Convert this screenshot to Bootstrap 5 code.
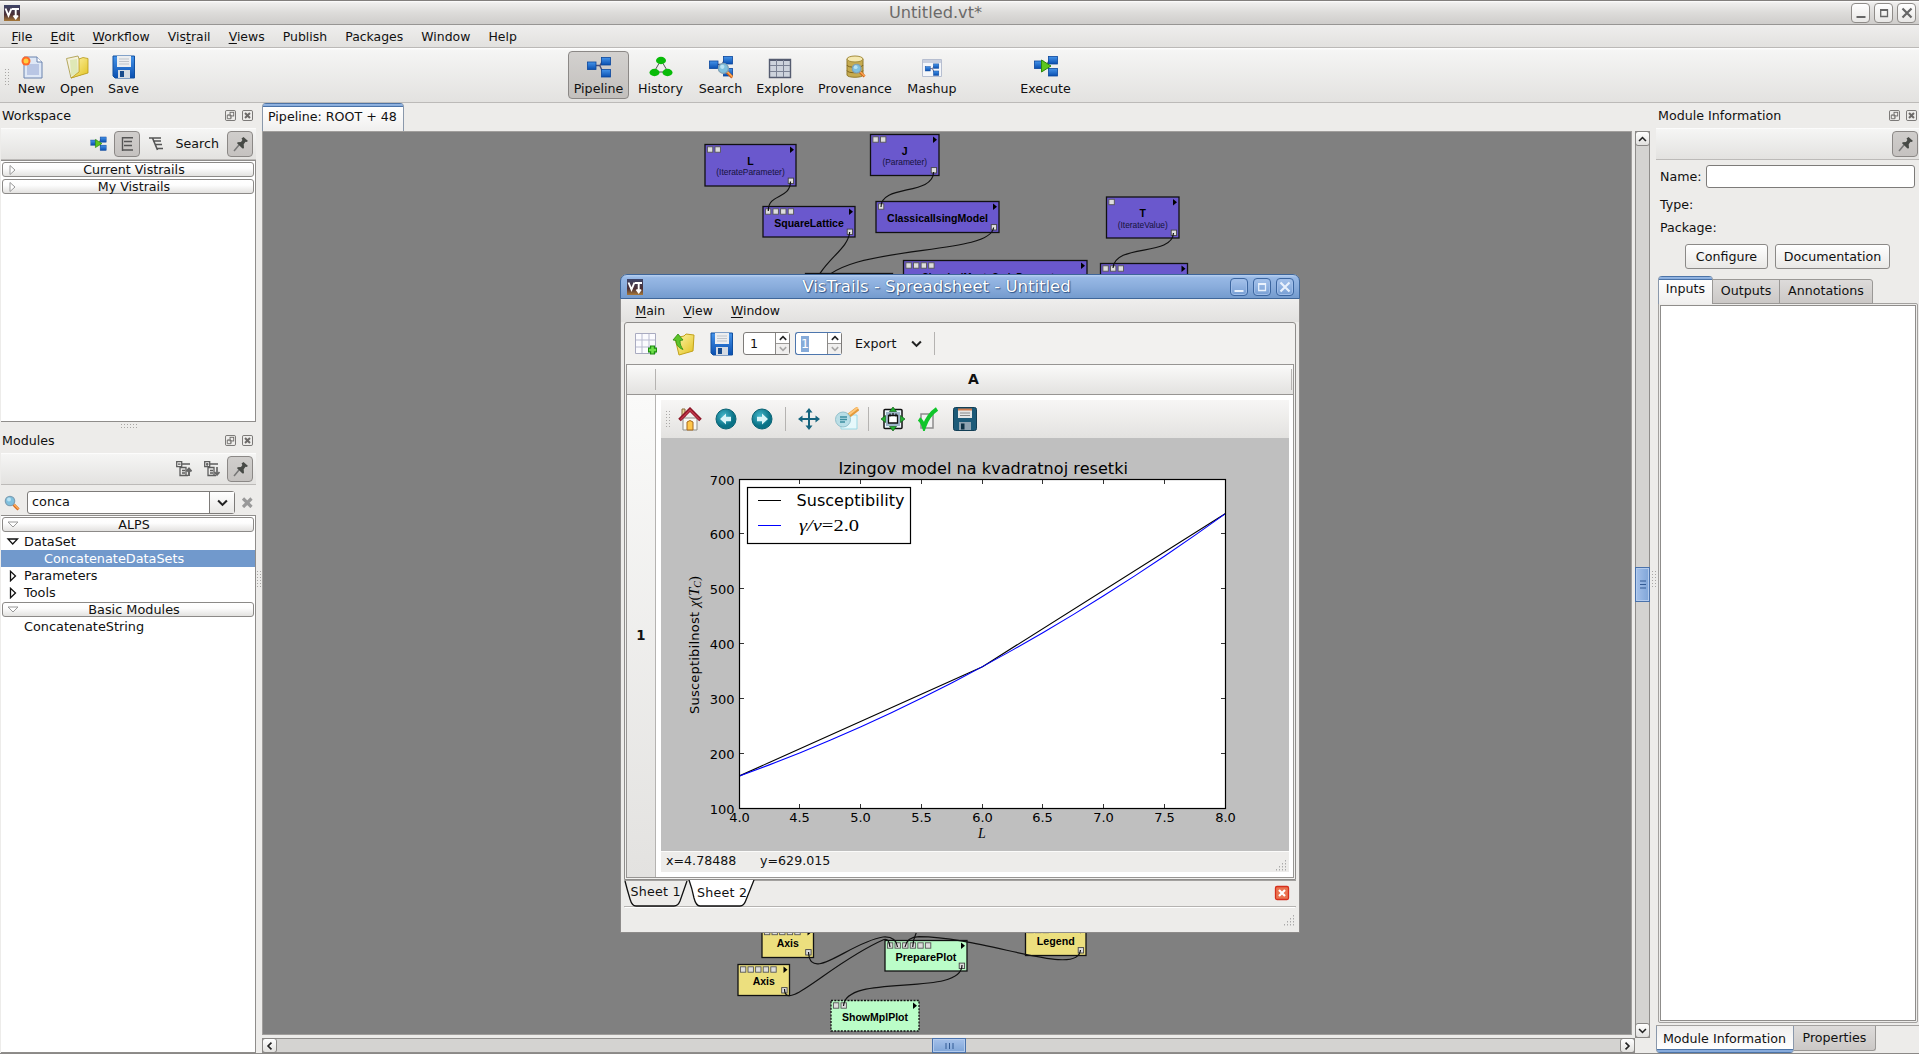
<!DOCTYPE html>
<html lang="en">
<head>
<meta charset="utf-8">
<title>Untitled.vt*</title>
<link href="https://cdn.jsdelivr.net/npm/bootstrap@5.3.0/dist/css/bootstrap.min.css" rel="stylesheet">
<script src="https://cdn.jsdelivr.net/npm/bootstrap@5.3.0/dist/js/bootstrap.bundle.min.js"></script>
<style>
*{box-sizing:border-box}
body{width:1919px;height:1054px;overflow:hidden;background:#edecea;color:#111;font:12.65px/16px "DejaVu Sans",sans-serif;white-space:nowrap;border-top:1px solid #827f7d;border-bottom:1px solid #8b8987}
svg{display:block;flex:none}
u{text-underline-offset:2px}
.title-bar{height:24px;background:linear-gradient(#fff 0,#efeeed 8%,#dddcda 50%,#cfcdcb);border-bottom:1px solid #979593;padding:0 3px 0 4px}
.title-bar .cap{font-size:16.2px;color:#6b6a69}
.wbtn{width:19px;height:20px;border:1px solid #8f8c89;border-radius:4px;background:linear-gradient(#fff,#e8e7e5);display:flex;align-items:center;justify-content:center}
.menu-bar{height:23px;padding:1px 0 0 11.5px;gap:18.1px;font-size:12.45px;background:linear-gradient(#efeeed,#e2e1df);border-bottom:1px solid #bbb9b7}
.tool-grad{background:linear-gradient(#fff 0,#f5f5f4 5%,#e3e2e0)}
.main-tools{height:55px;border-bottom:1px solid #bcbab8;padding-top:3px}
.tbtn{height:48px;padding-top:3px;border:1px solid transparent;border-radius:4px;display:flex;flex-direction:column;align-items:center;gap:2px}
.tbtn svg{height:24px}
.tbtn.on{background:linear-gradient(#d3d1cf,#c3c0bd);border-color:#8b8886;padding-top:3px}
.grip{background-image:radial-gradient(circle,#a9a7a5 .7px,transparent .9px);background-size:3px 3px}
.dock-l{width:256px;padding-left:1px}
.dock-cap{height:25px;padding:0 3px 0 1px}
.dock-tools{height:32px;border-bottom:1px solid #bcbab8;padding:0 3px 0 0}
.pin{width:26px;height:26px;border:1px solid #8b8886;border-radius:4px;background:linear-gradient(#d0cecc,#c5c2c0);display:flex;align-items:center;justify-content:center}
.pin svg{margin-left:2px}
.tree{background:#fff;border:solid #8f8d8b;border-width:1px 1px 1px 0}
.tree-row{height:17px;display:flex;align-items:center;font-size:12.85px}
.tree-head{height:15px;margin:1px;border:1px solid #8c8a88;border-radius:3px;background:linear-gradient(#fff,#fdfdfd 40%,#e3e2e0);text-align:center;position:relative;line-height:13px;padding-left:12px}
.tree-head svg{position:absolute;left:4px;top:1px}
.sel{background:#7199cc;color:#fff}
.combo{height:23px;border:1px solid #7d7b79;border-radius:3px;background:#fff}
.combo .drop{width:25px;border-left:1px solid #7d7b79;background:linear-gradient(#fff,#e9e8e6)}
.tab-top{border:1px solid #8a98ab;border-top:0;border-bottom:0;border-radius:4px 4px 0 0;background:linear-gradient(#4c74a8 0 1px,#96b8e4 1px,#86aadb 3px,#4c74a8 3px 4px,#fff 4px,#f0efee)}
.tab-off{background:linear-gradient(#dddbda,#cbc8c6);border:1px solid #9a9896}
.sb{background:#d4d3d1;border:1px solid #8f8d8b}
.sb-btn{background:linear-gradient(#fff,#e1e0de);border:1px solid #888684;border-radius:3px;width:15px;height:15px;display:flex;align-items:center;justify-content:center;margin:-1px}
.thumb{background:linear-gradient(90deg,#a5c1ea,#7fa5d8);border:1px solid #4a72ab;box-shadow:inset 0 0 0 1px #b3cbed;margin:-1px;display:flex;align-items:center;justify-content:center}
.dock-r{width:263px}
.push{height:25px;border:1px solid #8b8987;border-radius:3px;background:linear-gradient(#fff,#e9e8e6);padding:0;font-size:12.65px;line-height:16px;color:#111}
.win{left:620px;top:274px;width:680px;height:659px;background:#edecea;border:1px solid #8d8b8a;border-top:0;border-radius:7px 7px 0 0}
.win-cap{height:25px;margin:0 -1px;border:1px solid #3f6699;border-radius:7px 7px 0 0;background:linear-gradient(#b9d1f1 0,#97b8e5 12%,#8aaddc 50%,#749bce);padding:0 5px 0 6px}
.win-cap .cap{color:#fff;font-size:16.5px;text-shadow:0 0 1px #2f5487,1px 1px 1px #2f5487}
.win-cap .wbtn{width:18px;height:18px;border-color:#3c66a0;background:linear-gradient(#a5c2eb,#789fd4);box-shadow:inset 0 0 0 1px #9fbde8}
.frame2{margin:0 3px;height:558px;border:1px solid #8f8d8b;border-radius:3px 3px 0 0;padding:1px;background:#f2f1ef}
.spin{width:47px;height:23px;border:1px solid #7d7b79;border-radius:3px;background:#fff;display:flex}
.spin .ar{width:14px;border-left:1px solid #8b8987;background:linear-gradient(#fff 50%,#9b9997 50% 54%,#f0efee 54%)}
.sep{width:1px;background:#b5b3b1}
.grid-head{height:30px;border-bottom:1px solid #979593;background:linear-gradient(#fafaf9,#e3e2e0);font-weight:bold;font-size:14px}
.fig-tools{height:38px;background:linear-gradient(#f7f6f5,#e3e2e0)}
.nodes text{font-family:"Liberation Sans",sans-serif;text-anchor:middle}
</style>
</head>
<body class="d-flex flex-column">
<svg width="0" height="0" class="position-absolute">
<defs>
<linearGradient id="bl" x2="0" y2="1"><stop stop-color="#4594ea"/><stop offset="1" stop-color="#0a4fb0"/></linearGradient>
<linearGradient id="ye" x2="1" y2="1"><stop stop-color="#fff6b0"/><stop offset="1" stop-color="#e2c21e"/></linearGradient>
<radialGradient id="te" cx=".4" cy=".35"><stop stop-color="#45b8cc"/><stop offset="1" stop-color="#0a7286"/></radialGradient>
<linearGradient id="vt" x2="0" y2="1"><stop stop-color="#3d4468"/><stop offset=".6" stop-color="#4a2f35"/><stop offset="1" stop-color="#a87838"/></linearGradient>
<symbol id="logo" viewBox="0 0 16 16"><rect width="16" height="16" fill="url(#vt)"/><path d="M1.500 3.500l3 7 3-7M8 4h7M11.700 4v9M9.500 10.500l2.200 3 2.200-3" fill="none" stroke="#fff" stroke-width="1.900"/></symbol>
<symbol id="pipe" viewBox="0 0 24 22"><path d="M9 9.500h4L16 4h2M13 10l3 6.500h2" fill="none" stroke="#4a4f78" stroke-width="1.400"/><g fill="url(#bl)" stroke="#0b469c" stroke-width=".8"><rect x=".5" y="6" width="8.500" height="7.500"/><rect x="14.500" y="1.500" width="9" height="7.500"/><rect x="14.500" y="13.500" width="9" height="7.500"/></g></symbol>
<symbol id="play" viewBox="0 0 24 22"><use href="#pipe"/><path d="M7.500 5l9.500 6-9.500 6z" fill="#5cc61d" stroke="#2c8a0c"/></symbol>
<symbol id="mag" viewBox="0 0 16 16"><path d="M9.500 9.500l5 5" stroke="#d5641c" stroke-width="3"/><path d="M9.500 9l5 5" stroke="#ffb25c" stroke-width="1.300"/><circle cx="6" cy="6" r="4.700" fill="#7fc0de" stroke="#7fa0b5" stroke-width="1.200"/><circle cx="5" cy="4.500" r="2" fill="#b9e2f3"/></symbol>
<symbol id="disk" viewBox="0 0 24 24"><path d="M1 1h21.500v22H3L1 21z" fill="url(#bl)" stroke="#12509f"/><rect x="5" y="1" width="14" height="11" fill="#eceef0"/><path d="M7 4h10M7 6.500h10M7 9h10" stroke="#bfc4ca"/><rect x="6" y="15" width="12" height="8" fill="#d5dbe3"/><rect x="8" y="16" width="4" height="6" fill="#174a8c"/></symbol>
<symbol id="pinic" viewBox="0 0 16 16"><path d="M1 15L6 9" stroke="#777" stroke-width="1.500"/><path d="M8.500 2.500L10.500 1l4.500 4-1.500 1-1-.2-1.800 2.500.3 4-1.500.2L4.200 7.500l.3-1.300 3.500-.2 1.400-2z" fill="#474a46"/></symbol>
<symbol id="flt" viewBox="0 0 12 12"><g fill="none" stroke="#6c6a68"><rect x=".5" y=".5" width="11" height="11" rx="1.500"/><rect x="5.500" y="2.500" width="4" height="4"/><path d="M4 5.500H2.500v4h4V8M3 5.500h3.500V9"/></g></symbol>
<symbol id="cls" viewBox="0 0 12 12"><rect x=".5" y=".5" width="11" height="11" rx="1.500" fill="none" stroke="#6c6a68"/><path d="M3.300 3.300l5.400 5.400M8.700 3.300L3.300 8.700" stroke="#6c6a68" stroke-width="2.200"/></symbol>
<symbol id="chev" viewBox="0 0 10 7"><path d="M1 1.200l4 4 4-4" fill="none" stroke="#222" stroke-width="1.900"/></symbol>
<symbol id="minx" viewBox="0 0 12 12"><path d="M1.500 10h9" stroke="currentColor" stroke-width="2"/></symbol>
<symbol id="maxx" viewBox="0 0 12 12"><path d="M2.700 3v6.500h6.800V3z" fill="none" stroke="currentColor" stroke-width="1.300"/><path d="M2 3h8" stroke="currentColor" stroke-width="2"/></symbol>
<symbol id="xx" viewBox="0 0 12 12"><path d="M1.500 1.500l9 9M10.500 1.500l-9 9" stroke="currentColor" stroke-width="2.200"/></symbol>
<symbol id="folder" viewBox="0 0 24 24"><path d="M1.500 3.500L13 1l1 3 8.500 1L21 18 6 23z" fill="#f5f2dc" stroke="#b5a860"/><path d="M5 5l7-1 1 14-7 3z" fill="#dfe8b6"/><path d="M14 4l4-1.500 5 1V18L6 23l8-6z" fill="url(#ye)" stroke="#b89a1a" stroke-width=".8"/></symbol>
<symbol id="coll" viewBox="0 0 16 16"><g fill="none" stroke="#5d5d5d" stroke-width="1.300"><path d="M.7.700h5v5h-5zM2 3.200h2.500M6 3h8M4 6v8.500h8M4 6.500h6v8M6 9.500h3M6 12h3"/></g></symbol>
</defs></svg>

<header class="title-bar d-flex align-items-center">
<svg width="16" height="16"><use href="#logo"/></svg>
<div class="cap flex-fill text-center">Untitled.vt*</div>
<div class="d-flex" style="gap:4px;color:#666"><span class="wbtn"><svg width="12" height="12"><use href="#minx"/></svg></span><span class="wbtn"><svg width="12" height="12"><use href="#maxx"/></svg></span><span class="wbtn"><svg width="12" height="12"><use href="#xx"/></svg></span></div>
</header>
<nav class="menu-bar d-flex align-items-center"><span><u>F</u>ile</span><span><u>E</u>dit</span><span><u>W</u>orkflow</span><span>Vis<u>t</u>rail</span><span><u>V</u>iews</span><span>Publish</span><span>Packages</span><span>Window</span><span>Help</span></nav>
<div class="main-tools tool-grad d-flex">
<span class="grip" style="width:5px;height:17px;margin:17px 9px 0 4px"></span>
<div class="tbtn" style="width:27px"><svg width="24" viewBox="0 0 24 24"><path d="M4 2h13l5 5v16H4z" fill="#dfe8f6" stroke="#6b83ae"/><path d="M17 2v5h5" fill="#fff" stroke="#6b83ae"/><path d="M7 9h12v11H7z" fill="#b9c6e4"/><circle cx="6" cy="6" r="4.500" fill="#ff6a2a"/><circle cx="6" cy="6" r="2.500" fill="#ffd040"/></svg><span>New</span></div>
<div class="tbtn" style="width:36px;margin-left:14px"><svg width="24"><use href="#folder"/></svg><span>Open</span></div>
<div class="tbtn" style="width:31px;margin-left:13px"><svg width="24"><use href="#disk"/></svg><span>Save</span></div>
<div class="tbtn on" style="width:61px;margin-left:429px"><svg width="24"><use href="#pipe" width="24" height="22" y="1"/></svg><span>Pipeline</span></div>
<div class="tbtn" style="width:57px;margin-left:3px"><svg width="24" viewBox="0 0 24 24"><path d="M12 5L5 17M12 5l7 12M8 17h8" stroke="#555"/><g fill="#08bb08"><ellipse cx="12" cy="5.500" rx="5" ry="3.700"/><ellipse cx="5.500" cy="17.500" rx="5" ry="3.700"/><ellipse cx="18.500" cy="17.500" rx="5" ry="3.700"/></g></svg><span>History</span></div>
<div class="tbtn" style="width:57px;margin-left:3px"><svg width="24"><use href="#pipe" width="24" height="22"/><use href="#mag" x="8" y="7" width="17" height="17"/></svg><span>Search</span></div>
<div class="tbtn" style="width:58px;margin-left:2px"><svg width="24" viewBox="0 0 24 24"><path d="M1.500 4.500h21v18h-21z" fill="#cdd3dc" stroke="#555c70" stroke-width="1.400"/><path d="M1 5h22" stroke="#555c70" stroke-width="2"/><path d="M8.500 5v17M15.500 5v17M2 10.500h20M2 16.500h20" stroke="#7b8294"/></svg><span>Explore</span></div>
<div class="tbtn" style="width:86px;margin-left:3px"><svg width="24" viewBox="0 0 24 24"><path d="M4 4v16c0 3 16 3 16 0V4z" fill="#c6ab50" stroke="#927a2c"/><ellipse cx="12" cy="4" rx="8" ry="3" fill="#f4e8b0" stroke="#a58d3c"/><path d="M4 10c0 3 16 3 16 0M4 15.500c0 3 16 3 16 0" fill="none" stroke="#7d6420"/><use href="#mag" x="8" y="8" width="15" height="15"/></svg><span>Provenance</span></div>
<div class="tbtn" style="width:62px;margin-left:3px"><svg width="24" viewBox="0 0 24 24"><path d="M2.500 4.500h19v17h-19z" fill="#f4f6fa" stroke="#b6bed0"/><path d="M3 6.500h18" stroke="#c9cfde" stroke-width="3"/><use href="#pipe" x="4" y="8" width="16" height="13"/></svg><span>Mashup</span></div>
<div class="tbtn" style="width:63px;margin-left:51px"><svg width="24"><use href="#play" width="24" height="22"/></svg><span>Execute</span></div>
</div>

<main class="d-flex flex-fill" style="min-height:0">
<aside class="dock-l d-flex flex-column">
<div class="dock-cap d-flex align-items-center"><span class="flex-fill">Workspace</span><svg width="11" height="11" class="me-1"><use href="#flt"/></svg><svg width="11" height="11" style="margin:0 0 0 2px"><use href="#cls"/></svg></div>
<div class="dock-tools tool-grad d-flex align-items-center justify-content-end">
<svg width="17" height="15"><use href="#play"/></svg>
<span class="pin" style="margin-left:7px"><svg width="14" height="16" viewBox="0 0 14 16" class="m-0"><path d="M2.500 1v14M2 1.700h11M4 5.500h8M4 9.500h8M2 14h11" fill="none" stroke="#555" stroke-width="1.400"/></svg></span>
<svg width="14" height="15" viewBox="0 0 14 15" style="margin-left:9px"><path d="M0 2h12M4 5h8M6 8.500h7M8 12.500h6M3.500 2l5 12" fill="none" stroke="#555" stroke-width="1.600"/></svg>
<span style="margin:0 8px 0 13px">Search</span><span class="pin"><svg width="16" height="16"><use href="#pinic"/></svg></span></div>
<div class="tree" style="height:262px">
<div class="tree-head"><svg width="12" height="12"><path d="M3 1.500v9l5-4.500z" fill="#fff" stroke="#999"/></svg>Current Vistrails</div>
<div class="tree-head" style="margin-top:2px"><svg width="12" height="12"><path d="M3 1.500v9l5-4.500z" fill="#fff" stroke="#999"/></svg>My Vistrails</div></div>
<div class="d-flex justify-content-center align-items-end" style="height:6px"><span class="grip" style="width:18px;height:5px"></span></div>
<div class="dock-cap d-flex align-items-center"><span class="flex-fill">Modules</span><svg width="11" height="11" class="me-1"><use href="#flt"/></svg><svg width="11" height="11" style="margin:0 0 0 2px"><use href="#cls"/></svg></div>
<div class="dock-tools tool-grad d-flex align-items-center justify-content-end">
<svg width="16" height="16"><use href="#coll"/><path d="M13 15V8M10.500 10.500L13 7.500l2.500 3" fill="none" stroke="#666" stroke-width="2"/></svg>
<svg width="16" height="16" style="margin:0 7px 0 12px"><use href="#coll"/><path d="M3.200 2v2.800M13 6v8M10.500 11l2.500 3 2.500-3" fill="none" stroke="#666" stroke-width="1.700"/></svg>
<span class="pin"><svg width="16" height="16"><use href="#pinic"/></svg></span></div>
<div class="d-flex align-items-center" style="height:30px;padding:5px 3px 0"><svg width="16" height="16"><use href="#mag"/></svg>
<div class="combo d-flex" style="width:208px;margin:0 7px"><span class="flex-fill" style="padding:2px 4px;font-size:12.85px">conca</span><span class="drop d-flex align-items-center justify-content-center"><svg width="11" height="8"><use href="#chev"/></svg></span></div>
<svg width="11" height="11"><path d="M1 1.500l8.500 8.500M9.500 1.500L1 10" stroke="#999" stroke-width="3.200"/></svg></div>
<div class="tree flex-fill">
<div class="tree-head"><svg width="12" height="12"><path d="M1 3h10l-5 5z" fill="#fff" stroke="#999"/></svg>ALPS</div>
<div class="tree-row"><svg width="23" height="12"><path d="M7 3h9.500L11.700 8z" fill="none" stroke="#111" stroke-width="1.300"/></svg>DataSet</div>
<div class="tree-row sel" style="padding-left:43px">ConcatenateDataSets</div>
<div class="tree-row"><svg width="23" height="12"><path d="M9.500 1.300v9.500l5-4.800z" fill="none" stroke="#111" stroke-width="1.300"/></svg>Parameters</div>
<div class="tree-row"><svg width="23" height="12"><path d="M9.500 1.300v9.500l5-4.800z" fill="none" stroke="#111" stroke-width="1.300"/></svg>Tools</div>
<div class="tree-head" style="font-size:12.850px"><svg width="12" height="12"><path d="M1 3h10l-5 5z" fill="#fff" stroke="#999"/></svg>Basic Modules</div>
<div class="tree-row" style="padding-left:23px">ConcatenateString</div></div>
</aside>
<div class="d-flex align-items-center" style="width:6px"><span class="grip" style="width:6px;height:17px"></span></div>
<section class="d-flex flex-column" style="width:1389px">
<div style="height:28px"><div class="tab-top" style="width:142px;height:28px;padding:5px 5px;line-height:17px">Pipeline: ROOT + 48</div></div>
<div class="d-flex flex-fill" style="min-height:0">
<div style="width:1370px;height:904px;border:1px solid #a09e9c;background:#808080">
<svg id="canvas" class="nodes" width="1368" height="902" viewBox="263 132 1368 902"></svg></div>
<div class="sb d-flex flex-column" style="width:15px;margin-left:3px;height:907px">
<span class="sb-btn"><svg width="9" height="6" style="transform:rotate(180deg)"><use href="#chev"/></svg></span>
<span class="thumb" style="height:35px;margin-top:422px"><svg width="6" height="9"><path d="M0 1h6M0 4.500h6M0 8h6" stroke="#335b94"/></svg></span>
<span class="sb-btn mt-auto"><svg width="9" height="6"><use href="#chev"/></svg></span></div></div>
<div class="sb d-flex" style="width:1373px;height:15px">
<span class="sb-btn"><svg width="9" height="6" style="transform:rotate(90deg)"><use href="#chev"/></svg></span>
<span class="thumb" style="width:34px;margin-left:656px;background:linear-gradient(#a5c1ea,#7fa5d8)"><svg width="9" height="6"><path d="M1 0v6M4.500 0v6M8 0v6" stroke="#335b94"/></svg></span>
<span class="sb-btn ms-auto"><svg width="9" height="6" style="transform:rotate(-90deg)"><use href="#chev"/></svg></span></div>
</section>
<div class="d-flex align-items-center" style="width:5px"><span class="grip" style="width:5px;height:17px"></span></div>
<aside class="dock-r d-flex flex-column">
<div class="dock-cap d-flex align-items-center" style="padding-right:2px"><span class="flex-fill" style="padding-left:1px">Module Information</span><svg width="11" height="11" class="me-1"><use href="#flt"/></svg><svg width="11" height="11" style="margin:0 0 0 2px"><use href="#cls"/></svg></div>
<div class="dock-tools tool-grad d-flex align-items-center justify-content-end" style="padding-right:1px"><span class="pin"><svg width="16" height="16"><use href="#pinic"/></svg></span></div>
<div class="d-flex align-items-center" style="padding:5px 4px 0"><span style="width:46px">Name:</span><span class="combo flex-fill"></span></div>
<div style="padding:9px 4px 0">Type:</div><div style="padding:7px 4px 8px">Package:</div>
<div class="d-flex" style="padding-left:29px;gap:7px"><button class="push" style="width:83px">Configure</button><button class="push" style="width:115px">Documentation</button></div>
<div class="d-flex align-items-end" style="margin:7px 0 -1px 2px;position:relative;z-index:1"><span class="tab-top text-center" style="width:55px;height:28px;padding-top:5px">Inputs</span><span class="tab-off text-center" style="width:68px;height:25px;padding-top:3px;margin-left:-1px">Outputs</span><span class="tab-off text-center" style="width:94px;height:25px;padding-top:3px;border-radius:0 3px 0 0;margin-left:-1px">Annotations</span></div>
<div class="flex-fill" style="margin-left:2px;margin-right:1px;border:1px solid #a3a19f;padding:1px;border-radius:0 2px 2px 2px"><div class="h-100 bg-white" style="border:1px solid #8f8d8b"></div></div>
<div class="d-flex" style="margin-top:2px;border-top:1px solid #a3a19f;height:28px"><span class="text-center" style="width:138px;height:27px;padding:5px 1px 0 0;border:1px solid #8a98ab;border-width:0 1px;border-radius:0 0 4px 4px;background:linear-gradient(0deg,#4c74a8 0 1px,#86aadb 1px 3px,#4c74a8 3px 4px,#fff 4px,#f0efee)">Module Information</span><span class="tab-off text-center" style="width:82px;height:25px;padding-top:4px;border-width:0 1px 1px 0;border-radius:0 0 3px 0">Properties</span></div>
</aside>
</main>

<div class="win position-absolute d-flex flex-column">
<div class="win-cap d-flex align-items-center"><svg width="16" height="16"><use href="#logo"/></svg><div class="cap flex-fill text-center">VisTrails - Spreadsheet - Untitled</div><div class="d-flex" style="gap:5px;color:#e9f1fc"><span class="wbtn"><svg width="12" height="12"><use href="#minx"/></svg></span><span class="wbtn"><svg width="12" height="12"><use href="#maxx"/></svg></span><span class="wbtn"><svg width="12" height="12"><use href="#xx"/></svg></span></div></div>
<div class="menu-bar d-flex align-items-center" style="padding:0 0 0 14.500px;border:0"><span><u>M</u>ain</span><span><u>V</u>iew</span><span><u>W</u>indow</span></div>
<div class="frame2">
<div class="d-flex align-items-center" style="height:40px;padding:0 0 1px 8px">
<svg width="24" height="24" viewBox="0 0 24 24"><path d="M1.500 1.500h20v20h-20z" fill="#fbfbfe" stroke="#a9abc0"/><path d="M8 2v19M15 2v19M2 8h19M2 15h19" stroke="#b9bbd0"/><path d="M14 18h9M18.500 13.500v9" stroke="#1d8d10" stroke-width="5"/><path d="M15 18h7M18.500 14.500v7" stroke="#6fe04a" stroke-width="2.600"/></svg>
<svg width="24" height="24" viewBox="0 0 24 24" style="margin-left:14px"><path d="M3 6l9-2 2-2 8 1-1 16-14 4z" fill="url(#ye)" stroke="#c2a21a"/><path d="M1 8l5-6 5 6-3 .5c0 4 1 6 3 9-5-2-7-5-7-9z" fill="#5ec42a" stroke="#2f8d10" stroke-width=".8"/></svg>
<svg width="24" height="24" style="margin-left:14px"><use href="#disk"/></svg>
<div class="spin" style="margin-left:9px"><span class="flex-fill" style="padding:3px 6px">1</span><span class="ar d-flex flex-column align-items-center justify-content-around"><svg width="8" height="6" style="transform:rotate(180deg)"><use href="#chev"/></svg><svg width="8" height="6" opacity=".35"><use href="#chev"/></svg></span></div>
<div class="spin" style="margin-left:5px;border-color:#4d76ad #7d7b79 #4d76ad #4d76ad"><span class="flex-fill" style="padding:3px 5px"><span class="d-inline-block" style="background:#86abd9;color:#fff;width:8px;height:16px">1</span></span><span class="ar d-flex flex-column align-items-center justify-content-around"><svg width="8" height="6" style="transform:rotate(180deg)"><use href="#chev"/></svg><svg width="8" height="6" opacity=".35"><use href="#chev"/></svg></span></div>
<span style="margin:0 15px 0 13px">Export</span><svg width="11" height="8"><use href="#chev"/></svg><span class="sep" style="height:23px;margin-left:12px"></span></div>
<div style="border:1px solid #979593;height:514px;background:#fff">
<div class="grid-head d-flex"><span style="width:29px;border-right:1px solid #b5b3b1;margin:4px 0"></span><span class="flex-fill text-center" style="border-right:1px solid #b5b3b1;margin:4px 1px 4px 0;padding-top:2px">A</span></div>
<div class="d-flex" style="height:482px"><div class="d-flex align-items-center justify-content-center fw-bold" style="width:29px;font-size:13.300px;border-right:1px solid #b5b3b1;background:linear-gradient(#fafaf9,#e3e2e0)">1</div>
<div style="width:628px;margin:5px 0 0 5px">
<div class="fig-tools d-flex align-items-center" style="padding-left:4px">
<span class="grip" style="width:5px;height:18px"></span>
<svg width="24" height="24" viewBox="0 0 24 24" style="margin-left:8px"><path d="M4 2h3v8H4z" fill="#e8d49a" stroke="#8a6a3a"/><path d="M5 11h14v12H5z" fill="#f8f8f4" stroke="#8f8f8a"/><path d="M9 23v-8q3-3 6 0v8z" fill="#ffc64a" stroke="#a8691c"/><path d="M1.500 13L12 2.500 22.500 13" fill="none" stroke="#8c1426" stroke-width="3.600"/><path d="M2.500 12.500L12 3l9.500 9.500" fill="none" stroke="#c43a4c" stroke-width="1.400"/></svg>
<svg width="22" height="22" viewBox="0 0 22 22" style="margin-left:13px"><circle cx="11" cy="11" r="10" fill="url(#te)" stroke="#0a6374"/><path d="M5 11l6-5.500v3.300h5v4.400h-5v3.300z" fill="#d9f4f8"/></svg>
<svg width="22" height="22" viewBox="0 0 22 22" style="margin-left:14px"><circle cx="11" cy="11" r="10" fill="url(#te)" stroke="#0a6374"/><path d="M17 11l-6-5.500v3.300H6v4.400h5v3.300z" fill="#d9f4f8"/></svg>
<span class="sep" style="height:24px;margin:0 12px"></span>
<svg width="22" height="22" viewBox="0 0 22 22"><path d="M11 3v16M3 11h16" stroke="#15647e" stroke-width="2"/><path d="M11 0l3.500 4.500h-7zM11 22l3.500-4.500h-7zM0 11l4.500-3.500v7zM22 11l-4.500-3.500v7z" fill="#15647e"/></svg>
<svg width="25" height="24" viewBox="0 0 25 24" style="margin-left:14px"><path d="M7 8h16v14H7z" fill="#e6f8fb" stroke="#9bd8e4"/><path d="M15 8.500l9-7" stroke="#e39a3c" stroke-width="4.500"/><path d="M15 7.500l9-7" stroke="#ffc87c" stroke-width="2"/><circle cx="9" cy="12.500" r="7.500" fill="#b5dde6" stroke="#8abcc8" opacity=".9"/><path d="M6 10h7M6 12.500h7M6 15h5" stroke="#3d8fa0" stroke-width="1.300"/></svg>
<span class="sep" style="height:24px;margin:0 12px 0 9px"></span>
<svg width="24" height="24" viewBox="0 0 24 24"><rect x="3" y="2.500" width="18" height="19" rx="1" fill="#e9f3fa" stroke="#111" stroke-width="1.500"/><path d="M5 5h14v14H5z" fill="#9db5c8"/><path d="M7.500 8.500h9v7.500h-9z" fill="#fff" stroke="#111" stroke-width="1.300"/><path d="M9 6.500v3M12 6v3M15 6.500v3" stroke="#111" stroke-width="1.200"/><path d="M12 0l3.500 4.500h-7zM12 24l3.500-4.500h-7zM0 12l4.500-3.500v7zM24 12l-4.500-3.500v7z" fill="#22b030" stroke="#0d5c14" stroke-width=".7"/></svg>
<svg width="23" height="24" viewBox="0 0 23 24" style="margin-left:12px"><path d="M4 7h12v14H4z" fill="#f1f1f1" stroke="#8c8c8c" stroke-width="1.500"/><path d="M2 12q3 2 5 8Q11 8 20 2" fill="none" stroke="#10c52a" stroke-width="4"/></svg>
<svg width="24" height="24" viewBox="0 0 24 24" style="margin-left:13px"><rect x=".5" y=".5" width="23" height="23" rx="2" fill="#1c5a78" stroke="#123e54"/><path d="M5 2h14v9H5z" fill="#e4e6e6"/><path d="M5 2.500h14" stroke="#d07a4a" stroke-width="2"/><path d="M7 6h10M7 8.500h10" stroke="#888"/><path d="M6 15h12v8H6z" fill="#8fa4b2"/><path d="M8 16.500h3.500v6H8z" fill="#0f3346"/></svg></div>
<svg id="plot" width="628" height="413" viewBox="661 438 628 413" font-family="DejaVu Sans" font-size="13"></svg>
<div class="d-flex" style="height:21px;background:#edecea;border-top:1px solid #fbfbfa;padding:1px 2px 1px 5px"><span style="width:94px">x=4.78488</span><span class="flex-fill">y=629.015</span><svg width="12" height="12" class="align-self-end"><path d="M10.500 1v11M7.500 4v8M4.500 7v5M1.500 10v2" stroke="#aaa" stroke-dasharray="1.500 1.500"/></svg></div>
</div></div></div></div>
<div style="height:27px;border-bottom:1px solid #b5b3b1;margin:0 3px"><svg width="672" height="27" viewBox="624 880 672 27"><path d="M624 880.500h672" stroke="#a3a19f"/><path d="M625 881q2 8 5 18 2 7 6 7h38q4 0 6-5l7-20" fill="none" stroke="#111" stroke-width="1.300"/><path d="M689 880q3 8 5 18 2 8 6 8h40q4 0 6-6l8-20" fill="#fff" stroke="#111" stroke-width="1.300"/><g font-size="12.65" fill="#111"><text x="630.500" y="896" textLength="50">Sheet 1</text><text x="697" y="897" textLength="50">Sheet 2</text></g><rect x="1275.500" y="886.500" width="13" height="13" rx="1.500" fill="#ea7350" stroke="#d62f1c" stroke-width="1.300"/><path d="M1279 890l6 6M1285 890l-6 6" stroke="#fff" stroke-width="2.200"/></svg></div>
<div class="flex-fill d-flex align-items-center justify-content-end" style="border-top:1px solid #fff;margin:0 4px"><svg width="12" height="12"><path d="M10.500 1v11M7.500 4v8M4.500 7v5M1.500 10v2" stroke="#aaa" stroke-dasharray="1.500 1.500"/></svg></div>
</div>

<script>
// Workflow modules: x, y, width, height, fill, title, subtitle, input ports, dashed outline
const V='#6a58cd',Y='#ecdf7e',G='#bbfdc8';
const mods=[
 [705,144.5,91,41.5,V,'L','(IterateParameter)',2],[870.5,134.5,68.5,41,V,'J','(Parameter)',2],
 [763,206.5,92,30.5,V,'SquareLattice','',4],[876,201.5,123,31,V,'ClassicalIsingModel','',1],
 [1106.5,197,72.5,41,V,'T','(IterateValue)',1],[903.5,260.5,183.5,31,V,'ClassicalMonteCarloParameters','',4],
 [1100.5,263.5,87,31,V,'','',3],[805.5,273.5,87,31,V,'','',0],
 [762,927,51.5,30.5,Y,'Axis','',5],[738,964.5,51.5,31,Y,'Axis','',5],
 [885,940.5,82,30.5,G,'PreparePlot','',6],[1025.5,925,60.5,30.5,Y,'Legend','',3],
 [831,1000.5,88,30.5,G,'ShowMplPlot','',2,1]];
const len={SquareLattice:69.5,ClassicalIsingModel:101,PreparePlot:61,ShowMplPlot:66,ClassicalMonteCarloParameters:147,Legend:38};
let s='';
for(const [x,y,w,h,f,t,sub,n,dash] of mods){
 s+=`<rect x="${x}" y="${y}" width="${w}" height="${h}" fill="${f}" stroke="#111" stroke-width="1.300" ${dash?'stroke-dasharray="2 1.300"':''}/>`;
 for(let i=0;i<n;i++)s+=`<rect x="${x+2.4+i*7.6}" y="${y+2.3}" width="5.4" height="5.4" fill="#ddd" stroke="#555" stroke-width=".9"/>`;
 s+=`<path d="M${x+w-6} ${y+2}v6.500l4-3.200z" fill="#000"/>`;
 if(!dash)s+=`<rect x="${x+w-7.8}" y="${y+h-7.9}" width="5.4" height="5.4" fill="#ddd" stroke="#444" stroke-width=".9"/>`;
 const c=x+w/2;
 if(t)s+=`<text x="${c}" y="${y+20}" font-size="10.500" font-weight="bold" ${len[t]?`textLength="${len[t]}" lengthAdjust="spacingAndGlyphs"`:''}>${t}</text>`;
 if(sub)s+=`<text x="${c}" y="${y+30.7}" font-size="8.400" fill="#15123a">${sub}</text>`;
}
s+=`<g fill="none" stroke="#111" stroke-width="1.200">
<path d="M790.500 181.500C790 200 768 193 768.300 211"/><path d="M933.600 172C933 196 881 184 881 207"/>
<path d="M849.700 232C848 252 817 262 811 296"/><path d="M993.600 227.500C990 258 834 242 818 289"/>
<path d="M1173.500 233C1172 257 1115 243 1113 268"/>
<path d="M808.500 952C810 984 850 942 883 937Q896 936 897.500 947"/>
<path d="M784.500 989C785 1014 830 963 884 939.500Q889 938 890 947"/>
<path d="M1080.500 950C1078 978 985 937 919 936.700Q907 937 905 947"/>
<path d="M916.500 932Q913 940 912.700 947"/><path d="M962 965C962 998 845 972 843.500 1006"/></g>`;
canvas.innerHTML=s;

// Susceptibility plot
const X=v=>739.5+(v-4)*121.5,Yy=v=>808.5-(v-100)*329/600;
let p='<rect x="661" y="438" width="628" height="413" fill="#bfbfbf"/><rect x="739.500" y="479.500" width="486" height="329" fill="#fff"/>';
for(let i=0;i<9;i++){const x=Math.round(X(4+i/2))-.5;p+=`<path d="M${x} 808v-4M${x} 480v4" stroke="#333"/><text x="${x}" y="821.500" text-anchor="middle">${(4+i/2).toFixed(1)}</text>`}
for(let v=100;v<=700;v+=100){const y=Math.round(Yy(v))-.5;p+=`<path d="M740 ${y}h4M1225 ${y}h-4" stroke="#333"/><text x="734.500" y="${y+5}" text-anchor="end">${v}</text>`}
let b='';for(let l=4;l<=8.01;l+=.25)b+=`${X(l)},${Yy(9.965*l*l)} `;
p+=`<polyline points="${X(4)},${Yy(159.5)} ${X(6)},${Yy(358.7)} ${X(8)},${Yy(638)}" fill="none" stroke="#000" stroke-width="1.100"/><polyline points="${b}" fill="none" stroke="#00f" stroke-width="1.100"/>
<rect x="739.500" y="479.500" width="486" height="329" fill="none" stroke="#000" stroke-width="1.200"/>
<text x="838.500" y="473.500" font-size="16" textLength="289.500">Izingov model na kvadratnoj resetki</text>
<rect x="747.500" y="487.500" width="163" height="56" fill="#fff" stroke="#000" stroke-width="1.200"/>
<path d="M758 500.500h23" stroke="#000"/><path d="M758 525.500h23" stroke="#00f"/>
<text x="796.500" y="506" font-size="16" textLength="108">Susceptibility</text>
<g font-family="Liberation Serif"><text x="799" y="531" font-size="17" textLength="60" lengthAdjust="spacingAndGlyphs"><tspan font-style="italic">γ/ν</tspan>=2.0</text><text x="978" y="838" font-size="14" font-style="italic">L</text></g>
<text transform="translate(698.500 714) rotate(-90)" textLength="102">Susceptibilnost</text>
<text transform="translate(698.500 607) rotate(-90)" font-family="Liberation Serif" font-size="14.500"><tspan font-style="italic">χ</tspan>(<tspan font-style="italic">T</tspan><tspan font-style="italic" font-size="10" dy="2">C</tspan><tspan dy="-2">)</tspan></text>`;
plot.innerHTML=p;
</script>
</body>
</html>
